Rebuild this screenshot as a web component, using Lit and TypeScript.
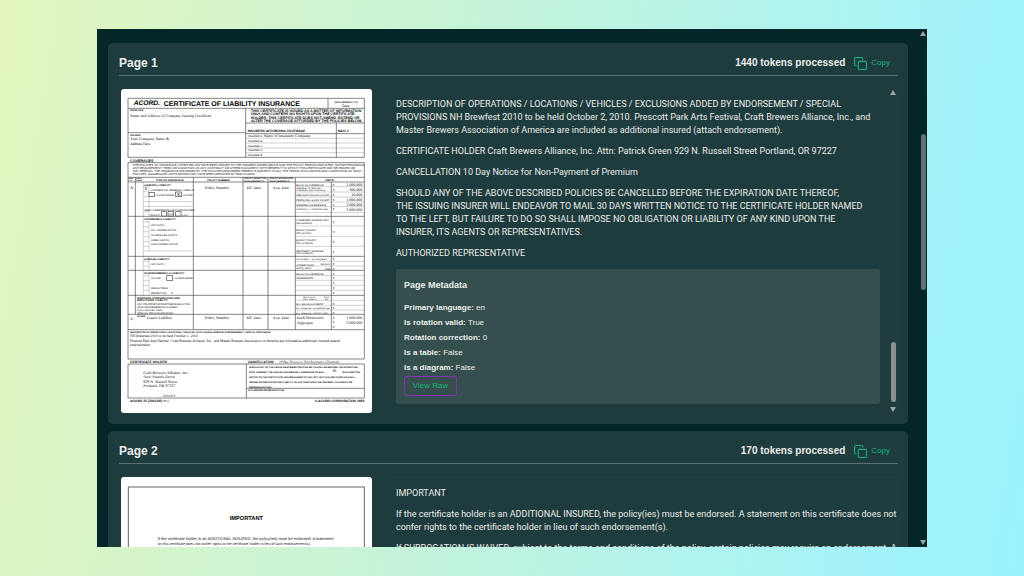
import { LitElement, html, svg, css } from "lit";
import { customElement, property } from "lit/decorators.js";

type Seg = [number, number, number, number];
type Label = [number, number, number, string, string?];

const range = (ys: number[], x1: number, x2: number): Seg[] => ys.map((y) => [x1, y, x2, y]);

const drawLines = (segs: Seg[], cls: string) =>
  segs.map(([x1, y1, x2, y2]) => svg`<line class=${cls} x1=${x1} y1=${y1} x2=${x2} y2=${y2}></line>`);

const drawLabels = (labels: Label[]) =>
  labels.map(([x, y, size, text, cls]) => svg`<text class=${cls ?? "sans"} x=${x} y=${y} font-size=${size}>${text}</text>`);

const HEAVY: Seg[] = [
  ...range([28, 58, 205, 221, 265, 279, 382, 502, 544, 619, 676, 722, 810, 825, 927], 21, 730),
  [21, 28, 21, 205], [730, 28, 730, 205], [621, 28, 621, 58], [374, 58, 374, 205],
  [21, 131, 374, 131], [374, 102, 730, 102], [374, 134, 730, 134], [646, 102, 646, 205],
  [21, 221, 21, 810], [730, 221, 730, 810],
  [43, 265, 43, 676], [217, 265, 217, 722], [366, 265, 366, 722], [441, 265, 441, 722],
  [523, 265, 523, 722], [631, 279, 631, 722],
  [21, 825, 21, 927], [730, 825, 730, 927], [376, 825, 376, 927], [376, 898, 730, 898],
];

const FINE: Seg[] = [
  ...range([148, 162, 177, 191], 374, 730),
  ...range([293, 309, 324, 339, 353, 371, 411, 442, 472, 517, 531, 560, 574, 589, 604, 634, 649, 663], 523, 730),
  ...range([338, 352, 486], 67, 212),
  ...range([294, 308, 323, 367, 399, 413, 428, 443, 458, 472, 517, 532, 560, 575, 590, 604], 67, 84),
  [67, 279, 67, 619], [84, 294, 84, 382], [84, 390, 84, 486], [84, 506, 84, 544], [84, 552, 84, 616],
];

const BOXES: [number, number, number, number][] = [
  [84, 310, 16, 13], [164, 309, 17, 14], [122, 368, 14, 13], [141, 368, 17, 13], [164, 368, 16, 13], [137, 560, 18, 14],
];

const FORM: Label[] = [
  [38, 49, 20, "ACORD.", "brand"],
  [128, 50, 21, "CERTIFICATE OF LIABILITY INSURANCE", "bold"],
  [641, 41, 7, "DATE (MM/DD/YYYY)", "bold"],
  [664, 54, 11, "Date", "serif"],
  [27, 67, 7, "PRODUCER", "bold"],
  [27, 85, 12, "Name and Address of Company Issuing Certificate", "serif"],
  [27, 141, 7, "INSURED", "bold"],
  [27, 154, 12, "Your Company Name &", "serif"],
  [27, 167, 11, "Address Here", "serif"],
  [389, 69, 11, "THIS CERTIFICATE IS ISSUED AS A MATTER OF INFORMATION", "bold"],
  [389, 79, 11, "ONLY AND CONFERS NO RIGHTS UPON THE CERTIFICATE", "bold"],
  [389, 89, 11, "HOLDER. THIS CERTIFICATE DOES NOT AMEND, EXTEND OR", "bold"],
  [389, 99, 11, "ALTER THE COVERAGE AFFORDED BY THE POLICIES BELOW.", "bold"],
  [380, 128, 10, "INSURERS AFFORDING COVERAGE", "bold"],
  [650, 128, 10, "NAIC #", "bold"],
  ...["A:", "B:", "C:", "D:", "E:"].map((n, i): Label => [380, 145 + i * 14, 8, "INSURER " + n]),
  [428, 144, 12, "Name of Insurance Company", "serif"],
  [27, 218, 11, "COVERAGES", "bold"],
  [35, 231, 9, "THE POLICIES OF INSURANCE LISTED BELOW HAVE BEEN ISSUED TO THE INSURED NAMED ABOVE FOR THE POLICY PERIOD INDICATED. NOTWITHSTANDING"],
  [35, 240, 9, "ANY REQUIREMENT, TERM OR CONDITION OF ANY CONTRACT OR OTHER DOCUMENT WITH RESPECT TO WHICH THIS CERTIFICATE MAY BE ISSUED OR"],
  [35, 250, 9, "MAY PERTAIN, THE INSURANCE AFFORDED BY THE POLICIES DESCRIBED HEREIN IS SUBJECT TO ALL THE TERMS, EXCLUSIONS AND CONDITIONS OF SUCH"],
  [35, 259, 9, "POLICIES. AGGREGATE LIMITS SHOWN MAY HAVE BEEN REDUCED BY PAID CLAIMS."],
  [22, 271, 6, "INSR", "bold"], [22, 277, 6, "LTR", "bold"], [45, 271, 6, "ADD'L", "bold"], [45, 277, 6, "INSRD", "bold"],
  [104, 276, 8, "TYPE OF INSURANCE", "bold"],
  [259, 276, 8, "POLICY NUMBER", "bold"],
  [370, 271, 7, "POLICY EFFECTIVE", "bold"], [370, 278, 7, "DATE (MM/DD/YY)", "bold"],
  [446, 271, 7, "POLICY EXPIRATION", "bold"], [446, 278, 7, "DATE (MM/DD/YY)", "bold"],
  [612, 276, 8, "LIMITS", "bold"],
  [27, 299, 13, "A", "serif"],
  [70, 290, 8, "GENERAL LIABILITY", "bold"],
  [70, 304, 13, "X", "serif"],
  [88, 306, 8, "COMMERCIAL GENERAL LIABILITY"],
  [104, 321, 8, "CLAIMS MADE"], [167, 321, 14, "X", "serif"], [185, 321, 8, "OCCUR"],
  [70, 365, 8, "GEN'L AGGREGATE LIMIT APPLIES PER:"],
  [88, 380, 8, "POLICY"], [143, 379, 7, "PRO-"], [184, 380, 8, "LOC"],
  [251, 300, 12, "Policy Number", "serif"],
  [377, 300, 12, "Eff. Date", "serif"],
  [457, 300, 12, "Exp. Date", "serif"],
  [526, 291, 8, "EACH OCCURRENCE"],
  [526, 300, 7, "DAMAGE TO RENTED"], [526, 307, 7, "PREMISES (Ea occurrence)"],
  [526, 321, 8, "MED EXP (Any one person)"],
  [526, 336, 8, "PERSONAL & ADV INJURY"],
  [526, 350, 8, "GENERAL AGGREGATE"],
  [526, 364, 7, "PRODUCTS - COMP/OP AGG"],
  ...["1,000,000", "300,000", "10,000", "1,000,000", "2,000,000", "2,000,000"].map(
    (n, i): Label => [724, 291 + i * 15, 12, n, "serif end"]
  ),
  ...[291, 306, 321, 336, 350, 364, 402, 432, 462, 492, 514, 528, 542, 557, 571, 586, 601, 616, 647, 661, 674, 689, 703, 718].map(
    (y): Label => [635, y, 8, "$"]
  ),
  [70, 394, 8, "AUTOMOBILE LIABILITY", "bold"],
  [90, 410, 8, "ANY AUTO"], [90, 425, 8, "ALL OWNED AUTOS"], [90, 440, 8, "SCHEDULED AUTOS"],
  [90, 455, 8, "HIRED AUTOS"], [90, 469, 8, "NON-OWNED AUTOS"],
  [526, 397, 8, "COMBINED SINGLE LIMIT"], [526, 405, 8, "(Ea accident)"],
  [526, 427, 8, "BODILY INJURY"], [526, 435, 8, "(Per person)"],
  [526, 457, 8, "BODILY INJURY"], [526, 465, 8, "(Per accident)"],
  [526, 488, 8, "PROPERTY DAMAGE"], [526, 496, 8, "(Per accident)"],
  [70, 512, 8, "GARAGE LIABILITY", "bold"], [90, 527, 8, "ANY AUTO"],
  [526, 514, 7, "AUTO ONLY - EA ACCIDENT"],
  [526, 531, 8, "OTHER THAN"], [526, 539, 8, "AUTO ONLY:"], [599, 528, 8, "EA ACC"], [612, 542, 8, "AGG"],
  [70, 556, 8, "EXCESS/UMBRELLA LIABILITY", "bold"],
  [90, 571, 8, "OCCUR"], [160, 571, 8, "CLAIMS MADE"], [90, 600, 8, "DEDUCTIBLE"], [90, 615, 8, "RETENTION"], [150, 615, 8, "$"],
  [526, 557, 8, "EACH OCCURRENCE"], [526, 571, 8, "AGGREGATE"],
  [48, 629, 8, "WORKERS COMPENSATION AND", "bold"], [48, 637, 8, "EMPLOYERS' LIABILITY", "bold"],
  [48, 648, 8, "ANY PROPRIETOR/PARTNER/EXECUTIVE"], [48, 656, 8, "OFFICER/MEMBER EXCLUDED?"],
  [48, 666, 8, "If yes, describe under"], [48, 674, 8, "SPECIAL PROVISIONS below"],
  [546, 626, 7, "WC STATU-"], [543, 633, 7, "TORY LIMITS"], [608, 626, 7, "OTH-"], [612, 633, 7, "ER"],
  [526, 647, 8, "E.L. EACH ACCIDENT"], [526, 661, 7, "E.L. DISEASE - EA EMPLOYEE"], [526, 674, 7, "E.L. DISEASE - POLICY LIMIT"],
  [27, 694, 12, "A", "serif"], [48, 685, 7, "OTHER", "bold"], [77, 690, 12, "Liquor Liability", "serif"],
  [251, 690, 12, "Policy Number", "serif"], [377, 690, 12, "Eff. Date", "serif"], [457, 690, 12, "Exp. Date", "serif"],
  [527, 691, 12, "Each Occurrence", "serif"], [527, 704, 12, "Aggregate", "serif"],
  [724, 691, 12, "1,000,000", "serif end"], [724, 704, 12, "2,000,000", "serif end"],
  [27, 731, 7, "DESCRIPTION OF OPERATIONS / LOCATIONS / VEHICLES / EXCLUSIONS ADDED BY ENDORSEMENT / SPECIAL PROVISIONS", "bold"],
  [27, 745, 11, "NH Brewfest 2010 to be held October 2, 2010.", "serif"],
  [27, 758, 11, "Prescott Park Arts Festival, Craft Brewers Alliance, Inc., and Master Brewers Association of America are included as additional insured (attach", "serif"],
  [27, 771, 11, "endorsement).", "serif"],
  [27, 821, 10, "CERTIFICATE HOLDER", "bold"],
  [380, 821, 10, "CANCELLATION", "bold"], [474, 821, 10, "10 Day Notice for Non-Payment of Premium", "serif"],
  [67, 854, 12, "Craft Brewers Alliance, Inc.", "serif"],
  [67, 868, 12, "Attn: Patrick Green", "serif"],
  [67, 882, 12, "929 N. Russell Street", "serif"],
  [67, 895, 12, "Portland, OR 97227", "serif"],
  [127, 925, 10, "LOAN #:", "serif"],
  [384, 836, 7, "SHOULD ANY OF THE ABOVE DESCRIBED POLICIES BE CANCELLED BEFORE THE EXPIRATION", "bold"],
  [384, 851, 7, "DATE THEREOF, THE ISSUING INSURER WILL ENDEAVOR TO MAIL", "bold"],
  [634, 850, 12, "30", "serif"], [664, 851, 7, "DAYS WRITTEN", "bold"],
  [384, 866, 7, "NOTICE TO THE CERTIFICATE HOLDER NAMED TO THE LEFT, BUT FAILURE TO DO SO SHALL", "bold"],
  [384, 881, 7, "IMPOSE NO OBLIGATION OR LIABILITY OF ANY KIND UPON THE INSURER, ITS AGENTS OR", "bold"],
  [384, 896, 7, "REPRESENTATIVES.", "bold"],
  [380, 907, 7, "AUTHORIZED REPRESENTATIVE", "bold"],
  [27, 939, 10, "ACORD 25 (2001/08)", "bold"], [127, 940, 9, "ID #:", "serif"],
  [730, 939, 10, "© ACORD CORPORATION 1988", "bold end"],
];

const NOTICE: Label[] = [
  [376, 130, 17, "IMPORTANT", "bold mid"],
  [110, 190, 12, "If the certificate holder is an ADDITIONAL INSURED, the policy(ies) must be endorsed. A statement"],
  [110, 205, 11, "on this certificate does not confer rights to the certificate holder in lieu of such endorsement(s)."],
];

@customElement("page-scan")
class PageScan extends LitElement {
  @property() kind = "form";

  static styles = css`
    :host { display: block; }
    .scan { display: block; width: 100%; background: #fff; border-radius: 3px; }
    .heavy { stroke: #4a4a4a; stroke-width: 2; }
    .fine { stroke: #777; stroke-width: 1; }
    .box { fill: #fff; stroke: #444; stroke-width: 2; }
    .frame { fill: none; stroke: #666; stroke-width: 3; }
    text { fill: #111; font-family: "Liberation Sans", Arial, sans-serif; text-rendering: geometricPrecision; }
    .bold { font-weight: 700; fill: #000; }
    .brand { font-weight: 700; font-style: italic; fill: #000; }
    .serif { font-family: "Liberation Serif", "Times New Roman", serif; fill: #000; }
    .end { text-anchor: end; }
    .mid { text-anchor: middle; }
  `;

  render() {
    const form = this.kind === "form";
    return html`<svg class="scan" viewBox="0 0 753 972" role="img" aria-label=${form ? "Scan of page 1" : "Scan of page 2"}>
      ${form
        ? svg`${drawLines(FINE, "fine")}${drawLines(HEAVY, "heavy")}
            ${BOXES.map(([x, y, w, h]) => svg`<rect class="box" x=${x} y=${y} width=${w} height=${h}></rect>`)}
            ${drawLabels(FORM)}`
        : svg`<rect class="frame" x="22" y="30" width="708" height="900"></rect>${drawLabels(NOTICE)}`}
    </svg>`;
  }
}

@customElement("scroll-rail")
class ScrollRail extends LitElement {
  @property({ type: Number }) before = 0;
  @property({ type: Number }) size = 50;
  @property({ type: Number }) after = 0;

  static styles = css`
    :host { display: flex; flex-direction: column; align-items: center; gap: 4px; width: 8px; }
    .arrow { display: block; width: 6px; height: 5px; fill: #9aa5a3; flex: none; }
    .track { flex: 1; display: flex; flex-direction: column; width: 5px; min-height: 0; }
    .thumb { border-radius: 3px; background: var(--thumb, #87938f); }
  `;

  render() {
    return html`
      <svg class="arrow" viewBox="0 0 6 5"><path d="M3 0L6 5H0Z" /></svg>
      <div class="track">
        <div style="flex:${this.before} 0 0"></div>
        <div class="thumb" style="flex:${this.size} 0 0"></div>
        <div style="flex:${this.after} 0 0"></div>
      </div>
      <svg class="arrow" viewBox="0 0 6 5"><path d="M0 0H6L3 5Z" /></svg>
    `;
  }
}

interface PageData {
  num: number;
  tokens: number;
  kind: string;
  paragraphs: string[];
  meta?: [string, string][];
}

const PAGES: PageData[] = [
  {
    num: 1,
    tokens: 1440,
    kind: "form",
    paragraphs: [
      "DESCRIPTION OF OPERATIONS / LOCATIONS / VEHICLES / EXCLUSIONS ADDED BY ENDORSEMENT / SPECIAL\nPROVISIONS NH Brewfest 2010 to be held October 2, 2010. Prescott Park Arts Festival, Craft Brewers Alliance, Inc., and\nMaster Brewers Association of America are included as additional insured (attach endorsement).",
      "CERTIFICATE HOLDER Craft Brewers Alliance, Inc. Attn: Patrick Green 929 N. Russell Street Portland, OR 97227",
      "CANCELLATION 10 Day Notice for Non-Payment of Premium",
      "SHOULD ANY OF THE ABOVE DESCRIBED POLICIES BE CANCELLED BEFORE THE EXPIRATION DATE THEREOF,\nTHE ISSUING INSURER WILL ENDEAVOR TO MAIL 30 DAYS WRITTEN NOTICE TO THE CERTIFICATE HOLDER NAMED\nTO THE LEFT, BUT FAILURE TO DO SO SHALL IMPOSE NO OBLIGATION OR LIABILITY OF ANY KIND UPON THE\nINSURER, ITS AGENTS OR REPRESENTATIVES.",
      "AUTHORIZED REPRESENTATIVE",
    ],
    meta: [
      ["Primary language:", "en"],
      ["Is rotation valid:", "True"],
      ["Rotation correction:", "0"],
      ["Is a table:", "False"],
      ["Is a diagram:", "False"],
    ],
  },
  {
    num: 2,
    tokens: 170,
    kind: "notice",
    paragraphs: [
      "IMPORTANT",
      "If the certificate holder is an ADDITIONAL INSURED, the policy(ies) must be endorsed. A statement on this certificate does not\nconfer rights to the certificate holder in lieu of such endorsement(s).",
      "If SUBROGATION IS WAIVED, subject to the terms and conditions of the policy, certain policies may require an endorsement. A\nstatement on this certificate does not confer rights to the certificate holder in lieu of such endorsement(s).",
    ],
  },
];

@customElement("app-root")
class AppRoot extends LitElement {
  static styles = css`
    * { box-sizing: border-box; }
    :host {
      display: block;
      box-sizing: border-box;
      height: 100vh;
      padding: 29px 97px;
      background: linear-gradient(100deg, #e4f6be 0%, #c4f3da 45%, #a2f3fb 88%, #9cf3fe 100%);
      font-family: "Liberation Sans", Arial, sans-serif;
      color: #eceeeb;
    }
    .window { display: flex; height: 100%; overflow: hidden; background: #042629; }
    .list { flex: 1; min-width: 0; overflow: hidden; padding: 14px 11px 0 11px; display: flex; flex-direction: column; gap: 7px; }
    .outer { --thumb: #61716f; padding: 2px 0; }
    .card { flex: none; background: #1e3b3d; border-radius: 5px; padding: 10px 10px 11px 11px; }
    .head { display: flex; align-items: flex-start; height: 23px; border-bottom: 1px solid #58706f; }
    .title { margin: 0; flex: 1; font-size: 12px; line-height: 20px; }
    .tokens { font-size: 10px; font-weight: 700; line-height: 20px; }
    .copy { display: flex; align-items: center; gap: 4px; height: 20px; margin: 0 8px 0 9px; padding: 0; border: 0; background: none; color: #14b57c; font: 8px/12px "Liberation Sans", Arial, sans-serif; }
    .copy svg { width: 13px; height: 13px; fill: none; stroke: currentColor; stroke-width: 2; stroke-linecap: round; stroke-linejoin: round; }
    .body { display: grid; grid-template-columns: 251px minmax(0, 1fr); gap: 16px; padding: 13px 0 0 2px; }
    .panel { display: flex; height: 324px; border: 1px solid #213f41; border-radius: 3px; overflow: hidden; }
    .text { flex: 1; min-width: 0; padding: 9px 0 8px 7px; font: 9px/13px Roboto, "Liberation Sans", Arial, sans-serif; }
    .first .text { padding: 8px 9px 8px 7px; }
    .para { margin: 0 0 8px; white-space: pre-line; }
    .meta { background: #344f4e; border-radius: 3px; padding: 8px; height: 135px; margin-top: 9px; font-family: "Liberation Sans", Arial, sans-serif; }
    .meta-title { margin: 0 0 7px; font-size: 9px; line-height: 16px; }
    .row { margin: 0; font-size: 8px; line-height: 15px; }
    .raw { display: block; height: 20px; width: 53px; margin-top: 1px; padding: 0; border: 1px solid #8a2fb4; border-radius: 3px; background: none; color: #14b57c; font: 8px/16px "Liberation Sans", Arial, sans-serif; }
  `;

  private card(p: PageData) {
    return html`<section class="card">
      <header class="head">
        <h2 class="title">Page ${p.num}</h2>
        <span class="tokens">${p.tokens} tokens processed</span>
        <button class="copy" type="button">
          <svg viewBox="0 0 24 24"><rect x="8" y="8" width="15" height="15" rx="2" /><path d="M4 16H3a2 2 0 0 1-2-2V3a2 2 0 0 1 2-2h11a2 2 0 0 1 2 2v1" /></svg>
          Copy
        </button>
      </header>
      <div class="body">
        <page-scan kind=${p.kind}></page-scan>
        <div class="panel ${p.meta ? "first" : ""}">
          <div class="text">
            ${p.paragraphs.map((t) => html`<p class="para">${t}</p>`)}
            ${p.meta
              ? html`<div class="meta">
                  <h3 class="meta-title">Page Metadata</h3>
                  ${p.meta.map(([k, v]) => html`<p class="row"><b>${k}</b> ${v}</p>`)}
                  <button class="raw" type="button">View Raw</button>
                </div>`
              : ""}
          </div>
          ${p.meta ? html`<scroll-rail before="244" size="60" after="1"></scroll-rail>` : ""}
        </div>
      </div>
    </section>`;
  }

  render() {
    return html`<main class="window">
      <div class="list">${PAGES.map((p) => this.card(p))}</div>
      <scroll-rail class="outer" before="94" size="156" after="246"></scroll-rail>
    </main>`;
  }
}
